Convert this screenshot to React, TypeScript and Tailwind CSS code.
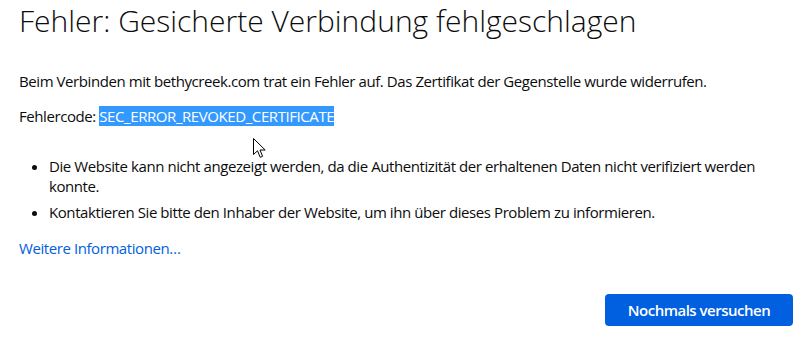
import { useState } from "react";

const MouseCursor = () => (
  <svg
    className="absolute left-[253px] top-[138px]"
    width="14"
    height="21"
    viewBox="0 0 14 21"
  >
    <path
      d="M0.5 0.5 L0.5 16.5 L4.5 12.8 L7.2 19.3 L9.6 18.3 L7 12 L12.2 12 Z"
      fill="white"
      stroke="black"
      strokeWidth="1"
      strokeLinejoin="miter"
    />
  </svg>
);

export default function App() {
  const [retries, setRetries] = useState(0);

  return (
    <div className="relative w-[811px] h-[349px] overflow-hidden bg-white text-[#0c0c0d] font-['Open_Sans','Noto_Sans',sans-serif]">
      <div className="pl-[19px] pr-[18px]">
        <h1 className="mt-[1px] text-[30px] leading-[40px] font-light tracking-normal">
          Fehler: Gesicherte Verbindung fehlgeschlagen
        </h1>

        <div className="text-[15px] leading-[20px] tracking-[-0.42px]">
          <p className="mt-[30px]">
            Beim Verbinden mit bethycreek.com trat ein Fehler auf. Das Zertifikat der Gegenstelle wurde
            widerrufen.
          </p>
          <p className="mt-[15px]">
            Fehlercode: <span className="bg-[#3399ff] text-white">SEC_ERROR_REVOKED_CERTIFICATE</span>
          </p>

          <ul className="mt-[30px] pl-[30px] list-disc flex flex-col gap-[6px]">
            <li>
              Die Website kann nicht angezeigt werden, da die Authentizität der erhaltenen Daten nicht
              verifiziert werden konnte.
            </li>
            <li>Kontaktieren Sie bitte den Inhaber der Website, um ihn über dieses Problem zu informieren.</li>
          </ul>

          <a href="#" className="block mt-[16px] text-[#0060df] w-fit">
            Weitere Informationen…
          </a>

          <div className="flex justify-end mt-[36px]">
            <button
              onClick={() => setRetries(retries + 1)}
              className="w-[188px] h-[32px] rounded-[4px] bg-[#0060df] text-white font-semibold tracking-[-0.5px]"
            >
              Nochmals versuchen
            </button>
          </div>
        </div>
      </div>
      <MouseCursor />
    </div>
  );
}
